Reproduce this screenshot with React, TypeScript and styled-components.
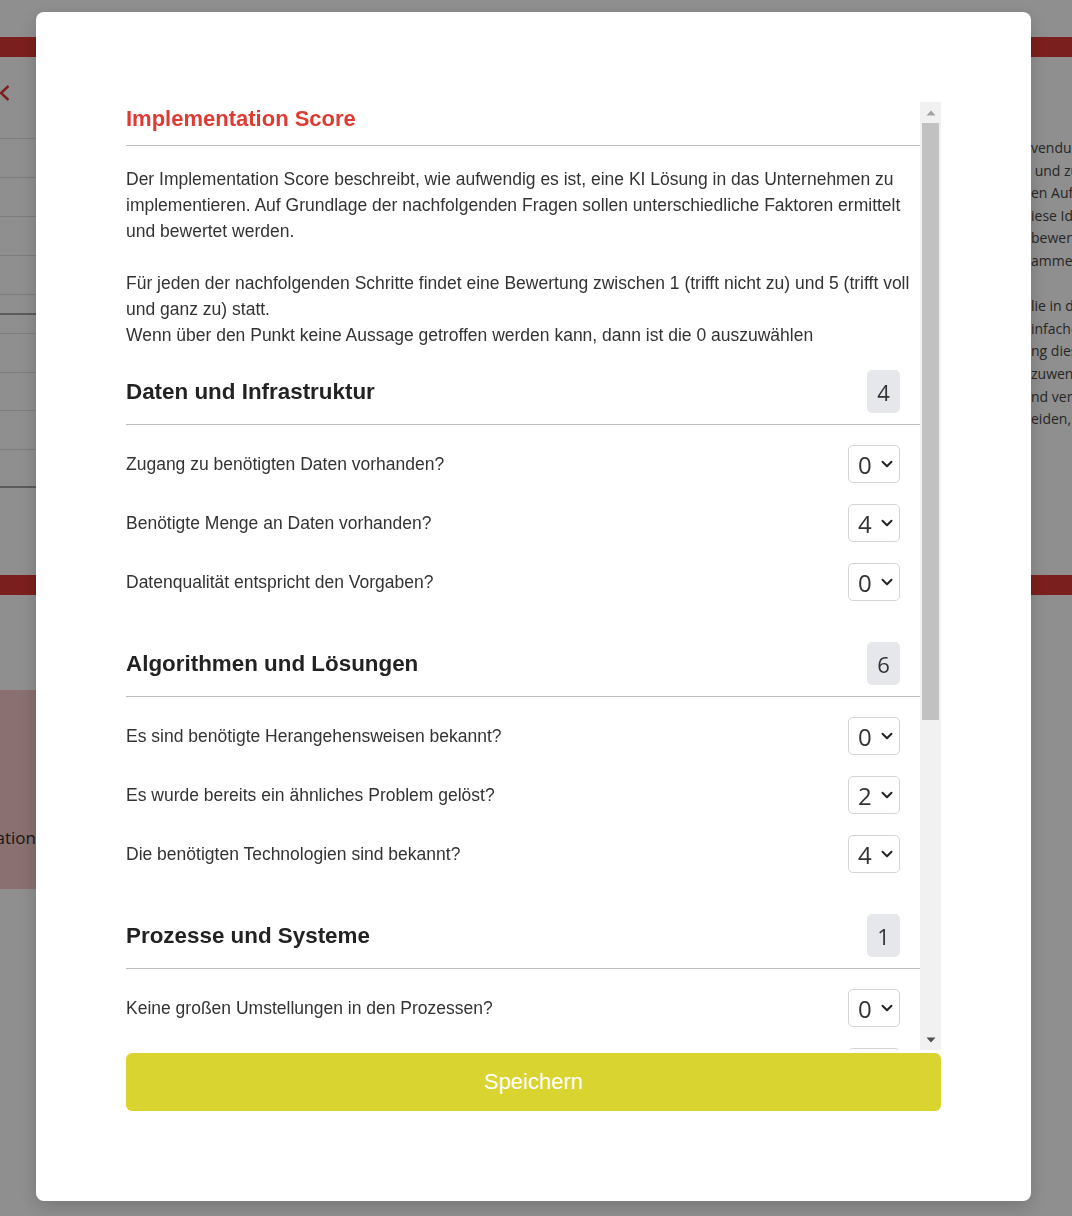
import React from "react";
import styled, { createGlobalStyle } from "styled-components";
import { ChevronDown } from "lucide-react";

const GlobalStyle = createGlobalStyle`
  html, body { margin: 0; padding: 0; height: 100%; overflow: hidden; background: #fff; }
  body { font-family: "Liberation Sans", Arial, sans-serif; }
  * { box-sizing: border-box; }
`;

/* ---------- background page ---------- */
const Page = styled.div`
  height: 1216px;
  padding-top: 37px;
  display: flex;
  flex-direction: column;
  background: #fff;
  overflow: hidden;
`;
const Stripe = styled.div`
  height: 20px;
  flex-shrink: 0;
  background: #dc3737;
`;
const TopSection = styled.div`
  height: 518px;
  display: grid;
  grid-template-columns: 36px 1fr 41px;
`;
const SideList = styled.div`
  display: flex;
  flex-direction: column;
  padding-top: 28px;
`;
const BackIcon = styled.div`
  height: 15px;
  display: flex;
  align-items: center;
`;
const ListRows = styled.div`
  display: flex;
  flex-direction: column;
`;
const ListRow = styled.div<{ $h: number; $dark?: boolean }>`
  height: ${(p) => p.$h + (p.$dark ? 2 : 1)}px;
  border-bottom: ${(p) => (p.$dark ? "2px solid #a2a2a2" : "1px solid #dedede")};
`;
const AsideText = styled.div`
  padding-top: 80px;
  font-family: "Open Sans", sans-serif;
  font-size: 14px;
  line-height: 22.6px;
  color: #454545;
  white-space: pre;
  overflow: hidden;
`;
const AsideLine = styled.div`
  height: 22.6px;
`;
const BottomSection = styled.div`
  display: grid;
  grid-template-columns: 36px 1fr;
  padding-top: 95px;
`;
const PinkCard = styled.div`
  height: 199px;
  background: #f6c8c8;
  display: flex;
  justify-content: flex-end;
  align-items: flex-end;
  padding-bottom: 40px;
  overflow: hidden;
  white-space: nowrap;
  font-family: "Open Sans", sans-serif;
  font-size: 17px;
  color: #2a2a2a;
`;

const Overlay = styled.div`
  position: fixed;
  inset: 0;
  background: rgba(0, 0, 0, 0.44);
`;

/* ---------- modal ---------- */
const Modal = styled.div`
  position: fixed;
  top: 12px;
  left: 36px;
  width: 995px;
  height: 1189px;
  background: #fff;
  border-radius: 8px;
  box-shadow: 0 6px 20px rgba(0, 0, 0, 0.18);
  padding: 90px;
  display: flex;
  flex-direction: column;
  gap: 3px;
`;

const ScrollFrame = styled.div`
  flex: 1;
  min-height: 0;
  display: flex;
`;
const ScrollViewport = styled.div`
  flex: 1;
  min-width: 0;
  overflow: hidden;
`;
const Rail = styled.div`
  width: 21px;
  flex-shrink: 0;
  background: #f1f1f1;
  display: flex;
  flex-direction: column;
`;
const RailButton = styled.div`
  height: 21px;
  flex-shrink: 0;
  display: flex;
  align-items: center;
  justify-content: center;
`;
const Thumb = styled.div<{ $len: number }>`
  height: ${(p) => p.$len}px;
  margin: 0 2px;
  background: #c1c1c1;
`;
const RailSpacer = styled.div`
  flex: 1;
`;

const Content = styled.div`
  padding-bottom: 7px;
`;

const Title = styled.h2`
  margin: 0;
  font-size: 22px;
  line-height: 33px;
  font-weight: 700;
  color: #df3b33;
  padding-bottom: 10px;
  border-bottom: 1px solid #bdbdbd;
`;

const Intro = styled.div`
  margin-top: 20px;
  display: flex;
  flex-direction: column;
  gap: 26px;
  font-size: 17.5px;
  line-height: 26px;
  color: #333;
`;
const Para = styled.p`
  margin: 0;
`;

const Sections = styled.div`
  margin-top: 22px;
  display: flex;
  flex-direction: column;
  gap: 41px;
`;

const SectionHeader = styled.div`
  display: flex;
  align-items: center;
  justify-content: space-between;
  padding: 0 20px 11px 0;
  border-bottom: 1px solid #bdbdbd;
`;
const SectionTitle = styled.h3`
  margin: 0;
  font-size: 22.4px;
  font-weight: 700;
  color: #222;
`;
const ScoreBadge = styled.div`
  width: 33px;
  height: 43px;
  border-radius: 5px;
  background: #e5e7eb;
  display: flex;
  align-items: center;
  justify-content: center;
  font-family: "Open Sans", sans-serif;
  font-size: 22px;
  color: #333;
`;

const Questions = styled.div`
  display: flex;
  flex-direction: column;
  gap: 21px;
  padding: 20px 20px 0 0;
`;
const QuestionRow = styled.div`
  height: 38px;
  display: flex;
  align-items: center;
  justify-content: space-between;
  font-size: 17.5px;
  color: #333;
`;

const SelectWrap = styled.div`
  position: relative;
  width: 52px;
  height: 38px;
  svg {
    position: absolute;
    right: 4px;
    top: 10px;
    pointer-events: none;
    color: #222;
  }
`;
const Select = styled.select`
  appearance: none;
  -webkit-appearance: none;
  width: 100%;
  height: 100%;
  margin: 0;
  padding: 0 0 0 9px;
  border: 1px solid #d4d4d8;
  border-radius: 5px;
  background: #fff;
  font-family: "Open Sans", sans-serif;
  font-size: 24px;
  color: #333;
  outline: none;
`;

const SaveButton = styled.button`
  height: 58px;
  flex-shrink: 0;
  width: 100%;
  border: none;
  border-radius: 6px;
  background: #dad430;
  color: #fff;
  font-family: "Liberation Sans", Arial, sans-serif;
  font-size: 22px;
  cursor: pointer;
`;

type Section = { title: string; score: number; items: [string, number][] };

const sections: Section[] = [
  {
    title: "Daten und Infrastruktur",
    score: 4,
    items: [
      ["Zugang zu benötigten Daten vorhanden?", 0],
      ["Benötigte Menge an Daten vorhanden?", 4],
      ["Datenqualität entspricht den Vorgaben?", 0],
    ],
  },
  {
    title: "Algorithmen und Lösungen",
    score: 6,
    items: [
      ["Es sind benötigte Herangehensweisen bekannt?", 0],
      ["Es wurde bereits ein ähnliches Problem gelöst?", 2],
      ["Die benötigten Technologien sind bekannt?", 4],
    ],
  },
  {
    title: "Prozesse und Systeme",
    score: 1,
    items: [
      ["Keine großen Umstellungen in den Prozessen?", 0],
      ["Integration in bestehende Systeme möglich?", 1],
      ["Benötigte Schnittstellen sind vorhanden?", 0],
    ],
  },
  {
    title: "Mitarbeiter und Organisation",
    score: 0,
    items: [
      ["Benötigtes Know-how ist vorhanden?", 0],
      ["Mitarbeiter stehen zur Verfügung?", 0],
      ["Akzeptanz bei den Mitarbeitern vorhanden?", 0],
      ["Budget für die Umsetzung vorhanden?", 0],
      ["Unterstützung durch das Management?", 0],
    ],
  },
];

const asideLines = [
  "vendung",
  " und zu",
  "en Aufwand",
  "iese Idee",
  "bewertet",
  "ammen",
  "",
  "lie in der",
  "infachen",
  "ng dieser",
  "zuwenden",
  "nd verbunden",
  "eiden, die",
];

const sideRows: { h: number; dark?: boolean }[] = [
  { h: 38 },
  { h: 38 },
  { h: 38 },
  { h: 38 },
  { h: 38 },
  { h: 18, dark: true },
  { h: 18 },
  { h: 38 },
  { h: 37 },
  { h: 38 },
  { h: 36, dark: true },
];

export default function App() {
  return (
    <>
      <GlobalStyle />
      <Page>
        <Stripe />
        <TopSection>
          <SideList>
            <BackIcon>
              <svg width="9" height="16" viewBox="0 0 9 16">
                <polyline points="8.5,1 1,8 8.5,15" fill="none" stroke="#dc3737" strokeWidth="2.4" />
              </svg>
            </BackIcon>
            <ListRows>
              {sideRows.map((r, i) => (
                <ListRow key={i} $h={r.h} $dark={r.dark} />
              ))}
            </ListRows>
          </SideList>
          <div />
          <AsideText>
            {asideLines.map((l, i) => (
              <AsideLine key={i}>{l}</AsideLine>
            ))}
          </AsideText>
        </TopSection>
        <Stripe />
        <BottomSection>
          <PinkCard>Implementation</PinkCard>
          <div />
        </BottomSection>
      </Page>
      <Overlay />
      <Modal>
        <ScrollFrame>
          <ScrollViewport>
            <Content>
              <Title>Implementation Score</Title>
              <Intro>
                <Para>
                  Der Implementation Score beschreibt, wie aufwendig es ist, eine KI Lösung in das Unternehmen zu
                  implementieren. Auf Grundlage der nachfolgenden Fragen sollen unterschiedliche Faktoren ermittelt
                  und bewertet werden.
                </Para>
                <Para>
                  Für jeden der nachfolgenden Schritte findet eine Bewertung zwischen 1 (trifft nicht zu) und 5 (trifft
                  voll und ganz zu) statt.
                  <br />
                  Wenn über den Punkt keine Aussage getroffen werden kann, dann ist die 0 auszuwählen
                </Para>
              </Intro>
              <Sections>
                {sections.map((s) => (
                  <div key={s.title}>
                    <SectionHeader>
                      <SectionTitle>{s.title}</SectionTitle>
                      <ScoreBadge>{s.score}</ScoreBadge>
                    </SectionHeader>
                    <Questions>
                      {s.items.map(([q, v]) => (
                        <QuestionRow key={q}>
                          <span>{q}</span>
                          <SelectWrap>
                            <Select defaultValue={String(v)}>
                              {[0, 1, 2, 3, 4, 5].map((n) => (
                                <option key={n} value={String(n)}>
                                  {n}
                                </option>
                              ))}
                            </Select>
                            <ChevronDown size={18} strokeWidth={2.6} />
                          </SelectWrap>
                        </QuestionRow>
                      ))}
                    </Questions>
                  </div>
                ))}
              </Sections>
            </Content>
          </ScrollViewport>
          <Rail>
            <RailButton>
              <svg width="10" height="6" viewBox="0 0 10 6">
                <polygon points="5,0.5 9.5,5.5 0.5,5.5" fill="#a3a3a3" />
              </svg>
            </RailButton>
            <Thumb $len={597} />
            <RailSpacer />
            <RailButton>
              <svg width="10" height="6" viewBox="0 0 10 6">
                <polygon points="0.5,0.5 9.5,0.5 5,5.5" fill="#505050" />
              </svg>
            </RailButton>
          </Rail>
        </ScrollFrame>
        <SaveButton>Speichern</SaveButton>
      </Modal>
    </>
  );
}
